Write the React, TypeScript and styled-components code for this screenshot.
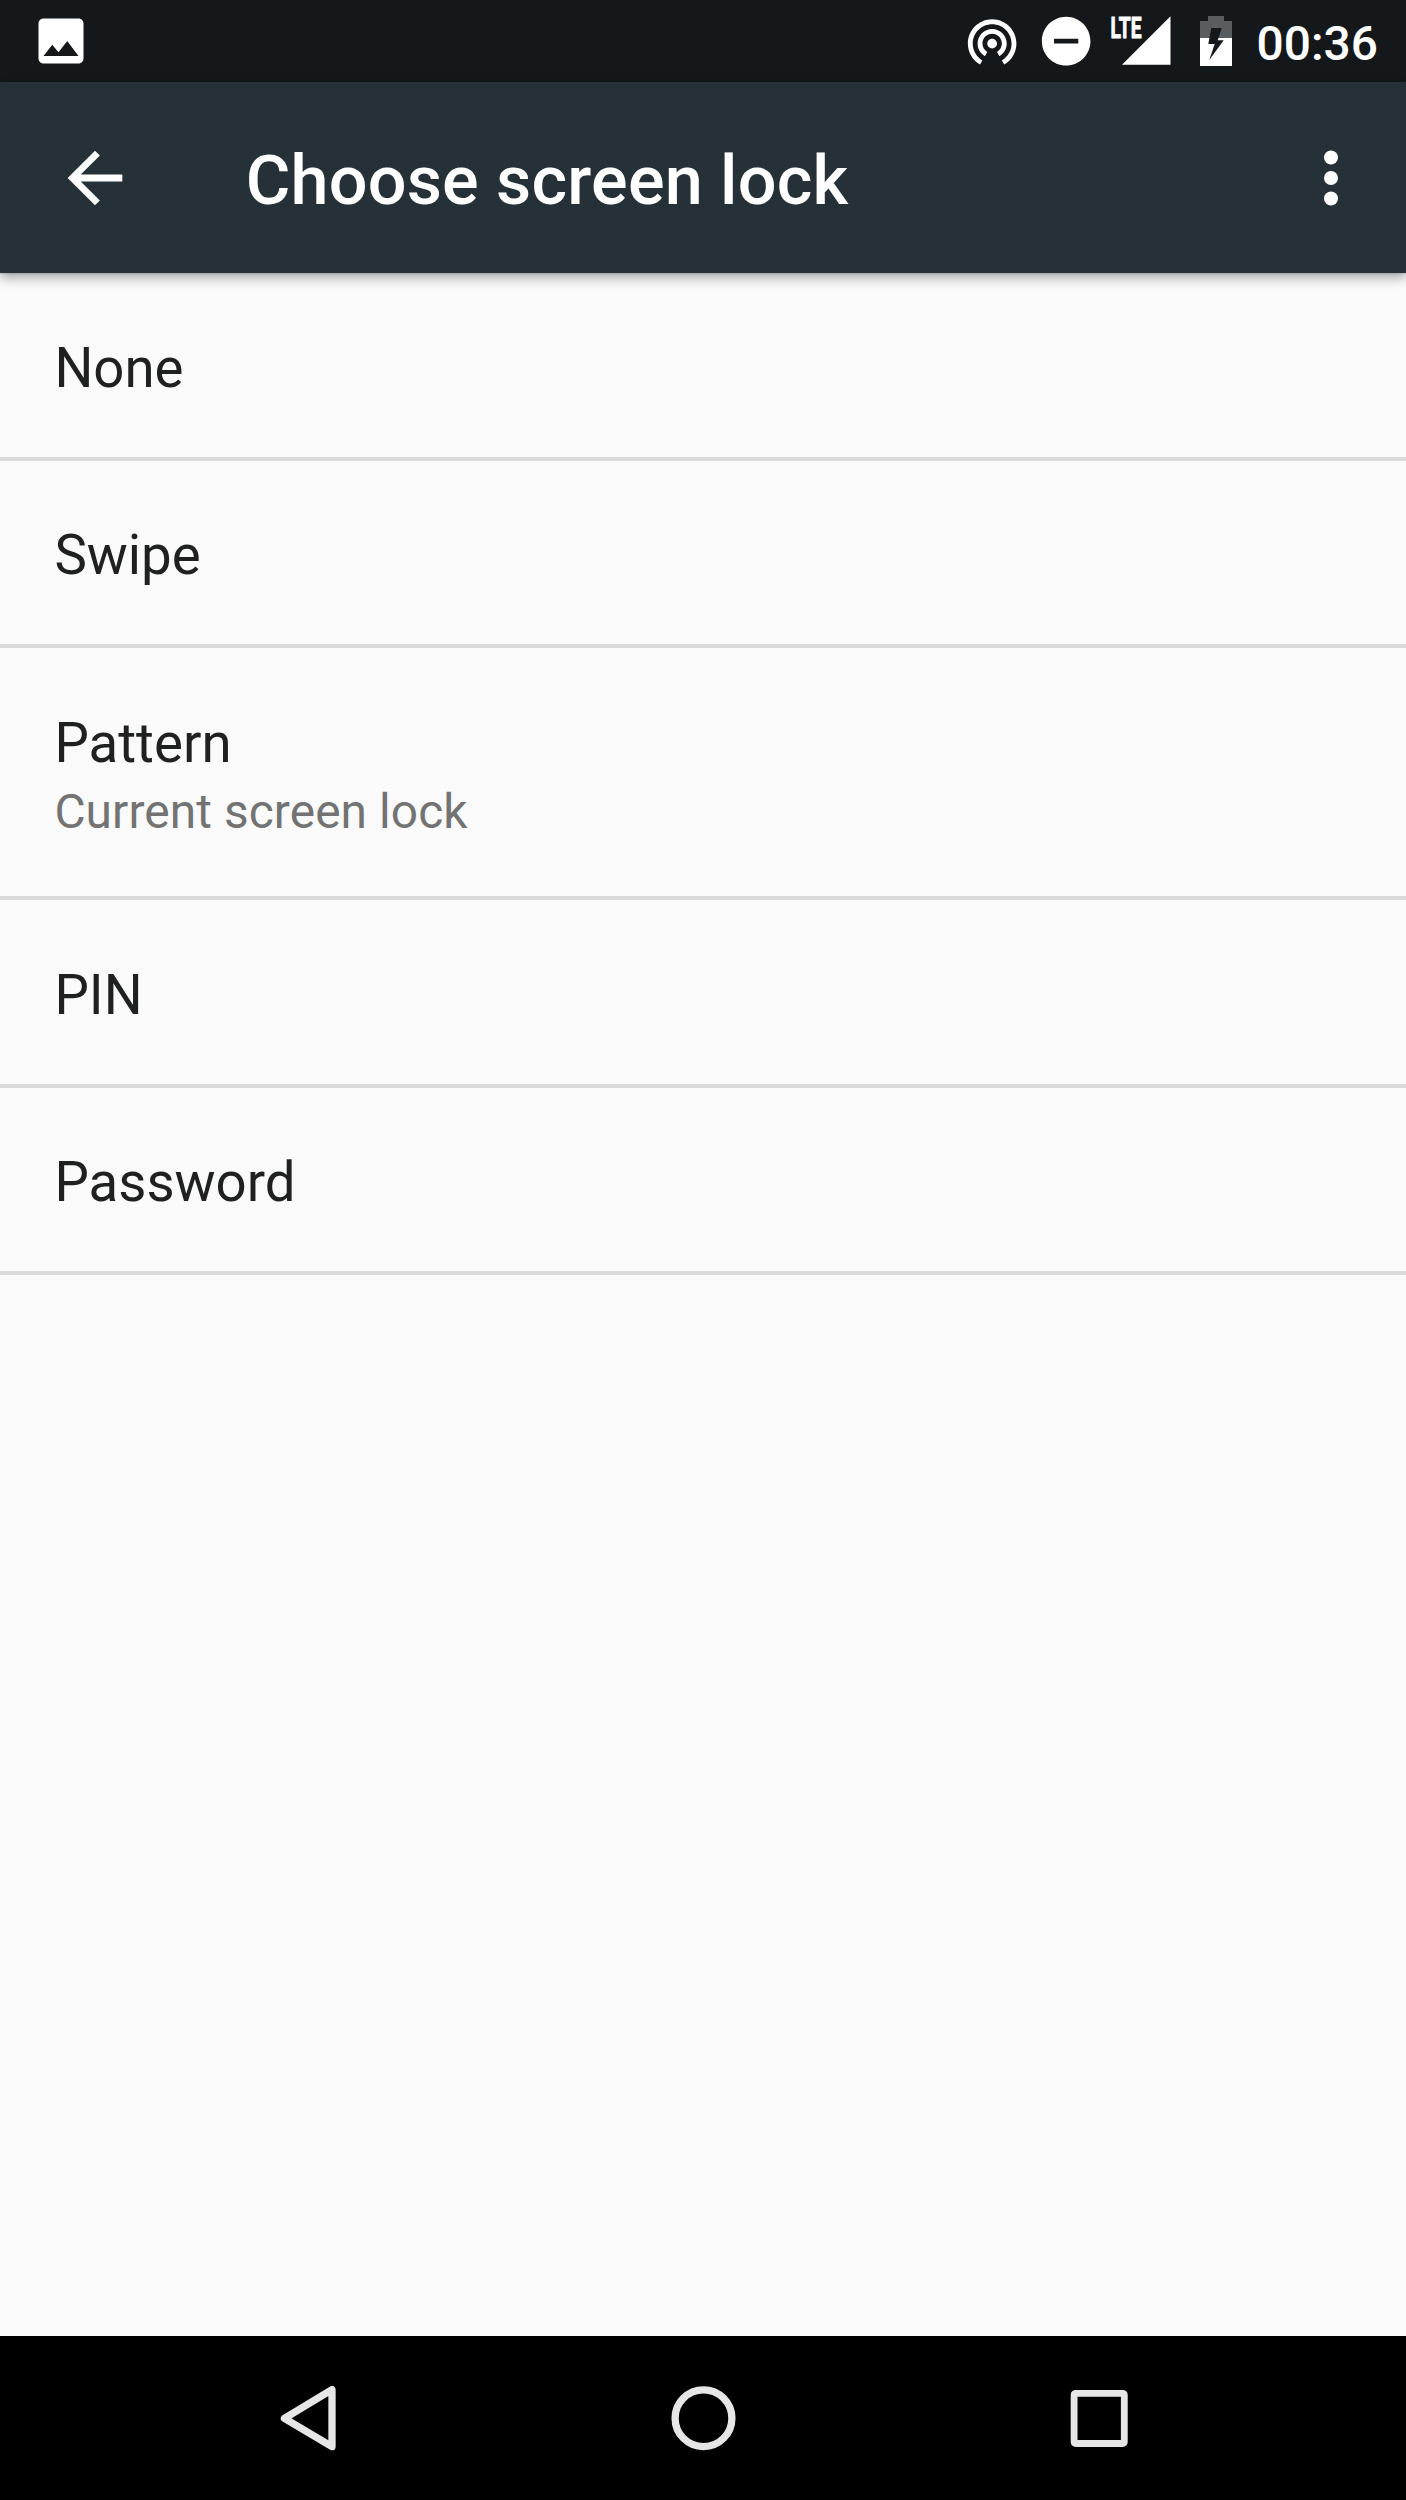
import React from 'react';
import styled, { createGlobalStyle } from 'styled-components';

const GlobalStyle = createGlobalStyle`
  * { box-sizing: border-box; }
  html, body { margin: 0; padding: 0; background: #fafafa; }
`;

const Screen = styled.div`
  display: flex;
  flex-direction: column;
  width: 1406px;
  height: 2500px;
  overflow: hidden;
  background: #fafafa;
  font-family: Roboto, 'Noto Sans', sans-serif;
`;

const StatusBar = styled.header`
  display: flex;
  flex: none;
  align-items: center;
  justify-content: space-between;
  height: 82px;
  padding: 0 28px 0 31.4px;
  background: #14181b;
  color: #fff;
`;

const StatusGroup = styled.div`
  display: flex;
  align-items: center;
`;

const Glyph = styled.svg<{ $w: number; $h: number; $ml?: number }>`
  display: block;
  flex: none;
  overflow: visible;
  width: ${p => p.$w}px;
  height: ${p => p.$h}px;
  margin-left: ${p => p.$ml ?? 0}px;
`;

const Clock = styled.time`
  margin-left: 24.7px;
  padding-top: 5px;
  font-size: 47.85px;
  font-weight: 500;
  line-height: 56px;
`;

const Toolbar = styled.div`
  position: relative;
  display: flex;
  flex: none;
  align-items: center;
  height: 191.4px;
  padding: 0 34px 0 54.2px;
  background: #263137;
  color: #fff;
  box-shadow: 0 5px 11px rgba(0, 0, 0, 0.32), 0 1px 2px rgba(0, 0, 0, 0.12);
`;

const IconButton = styled.button`
  display: flex;
  padding: 0;
  border: 0;
  background: none;
  color: inherit;
`;

const Title = styled.h1`
  flex: 1;
  margin: 0 0 0 109.6px;
  padding-top: 6px;
  font-size: 68.35px;
  font-weight: 500;
  letter-spacing: 0.2px;
  line-height: 80px;
`;

const List = styled.main`
  flex: 1;
`;

const Row = styled.div<{ $tall?: boolean }>`
  display: flex;
  flex-direction: column;
  height: ${p => (p.$tall ? 252.4 : 187.35)}px;
  padding: 62.6px 54.4px 0;
  border-bottom: 4px solid #dadada;
`;

const RowTitle = styled.span`
  color: #1f2020;
  font-size: 54.6px;
  line-height: 64px;
`;

const RowSummary = styled.span`
  margin-top: 9px;
  color: #737373;
  font-size: 47.85px;
  letter-spacing: 0.09px;
  line-height: 56px;
`;

const NavBar = styled.nav`
  display: flex;
  flex: none;
  align-items: center;
  justify-content: center;
  height: 164px;
  background: #000;
`;

const NavButton = styled(IconButton)`
  align-items: center;
  justify-content: center;
  width: 395.5px;
  height: 164px;
  color: #e6e6e6;
`;

const options = [
  { title: 'None' },
  { title: 'Swipe' },
  { title: 'Pattern', summary: 'Current screen lock' },
  { title: 'PIN' },
  { title: 'Password' },
];

export default function App() {
  return (
    <>
      <GlobalStyle />
      <Screen>
        <StatusBar>
          <StatusGroup>
            <Glyph $w={60} $h={60} viewBox="0 0 24 24" fill="currentColor">
              <path d="M21 19V5c0-1.1-.9-2-2-2H5c-1.1 0-2 .9-2 2v14c0 1.1.9 2 2 2h14c1.1 0 2-.9 2-2zM8.5 13.5l2.5 3.01L14.5 12l4.5 6H5l3.5-4.5z" />
            </Glyph>
          </StatusGroup>
          <StatusGroup>
            <Glyph $w={58.3} $h={58.3} viewBox="0 0 24 24" fill="currentColor">
              <path d="M12 11c-1.1 0-2 .9-2 2s.9 2 2 2 2-.9 2-2-.9-2-2-2zm6 2c0-3.31-2.69-6-6-6s-6 2.69-6 6c0 2.22 1.21 4.15 3 5.19l1-1.74c-1.19-.7-2-1.97-2-3.45 0-2.21 1.79-4 4-4s4 1.79 4 4c0 1.48-.81 2.75-2 3.45l1 1.74c1.79-1.04 3-2.97 3-5.19zM12 3C6.48 3 2 7.48 2 13c0 3.7 2.01 6.92 4.99 8.65l1-1.73C5.61 18.53 4 15.96 4 13c0-4.42 3.58-8 8-8s8 3.58 8 8c0 2.96-1.61 5.53-4 6.92l1 1.73c2.99-1.73 5-4.95 5-8.65 0-5.52-4.48-10-10-10z" />
            </Glyph>
            <Glyph $w={58.3} $h={58.3} $ml={15} viewBox="0 0 24 24" fill="currentColor">
              <path d="M12 2C6.48 2 2 6.48 2 12s4.48 10 10 10 10-4.48 10-10S17.52 2 12 2zm5 11H7v-2h10v2z" />
            </Glyph>
            <Glyph $w={62} $h={50} $ml={15} viewBox="0 0 62 50" fill="currentColor">
              <path d="M60.5.3v48.4H12z" />
              <text x="0.6" y="22" fontSize="28.6" fontWeight="700" stroke="currentColor" strokeWidth="0.9" textLength="31" lengthAdjust="spacingAndGlyphs">LTE</text>
            </Glyph>
            <Glyph $w={32} $h={50} $ml={28} viewBox="0 0 32 50">
              <path d="M0 5h8V0h16v5h8v17H0z" fill="#5a5d5f" />
              <path d="M0 22h32v28H0z" fill="#fff" />
              <path d="M11.3 12h10.4l-4 12.3h6L9.3 44l5.4-16H8.3z" fill="#14181b" />
            </Glyph>
            <Clock>00:36</Clock>
          </StatusGroup>
        </StatusBar>
        <Toolbar>
          <IconButton aria-label="Back">
            <Glyph $w={82} $h={82} viewBox="0 0 24 24" fill="currentColor">
              <path d="M20 11H7.83l5.59-5.59L12 4l-8 8 8 8 1.41-1.41L7.83 13H20v-2z" />
            </Glyph>
          </IconButton>
          <Title>Choose screen lock</Title>
          <IconButton aria-label="More options">
            <Glyph $w={82} $h={82} viewBox="0 0 24 24" fill="currentColor">
              <circle cx="12" cy="6" r="2.05" />
              <circle cx="12" cy="12" r="2.05" />
              <circle cx="12" cy="18" r="2.05" />
            </Glyph>
          </IconButton>
        </Toolbar>
        <List>
          {options.map(o => (
            <Row key={o.title} $tall={!!o.summary}>
              <RowTitle>{o.title}</RowTitle>
              {o.summary && <RowSummary>{o.summary}</RowSummary>}
            </Row>
          ))}
        </List>
        <NavBar>
          <NavButton aria-label="Back">
            <Glyph $w={72} $h={72} viewBox="0 0 72 72" fill="none" stroke="currentColor" strokeWidth="7.3" strokeLinejoin="round">
              <path d="M60 7.7v57L12.4 36.3z" />
            </Glyph>
          </NavButton>
          <NavButton aria-label="Home">
            <Glyph $w={72} $h={72} viewBox="0 0 72 72" fill="none" stroke="currentColor" strokeWidth="7.3">
              <circle cx="36.5" cy="36.2" r="28.4" />
            </Glyph>
          </NavButton>
          <NavButton aria-label="Recent apps">
            <Glyph $w={72} $h={72} viewBox="0 0 72 72" fill="currentColor" fillRule="evenodd">
              <path d="M12.7 7.9h47a5 5 0 0 1 5 5v47a5 5 0 0 1-5 5h-47a5 5 0 0 1-5-5v-47a5 5 0 0 1 5-5zM14.5 14.7v43.4h43.4V14.7z" />
            </Glyph>
          </NavButton>
        </NavBar>
      </Screen>
    </>
  );
}
